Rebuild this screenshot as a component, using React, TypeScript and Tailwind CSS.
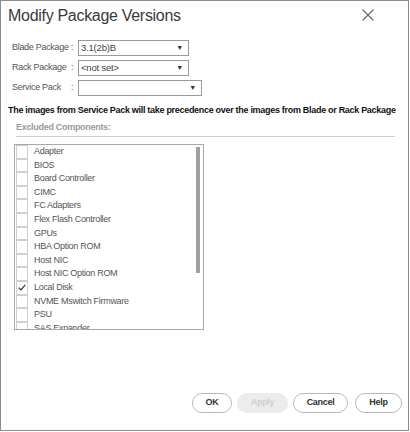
import React from "react";

const items = [
  "Adapter",
  "BIOS",
  "Board Controller",
  "CIMC",
  "FC Adapters",
  "Flex Flash Controller",
  "GPUs",
  "HBA Option ROM",
  "Host NIC",
  "Host NIC Option ROM",
  "Local Disk",
  "NVME Mswitch Firmware",
  "PSU",
  "SAS Expander",
];

function Select({ value, width }: { value: string; width: string }) {
  return (
    <div
      className={`${width} h-[16px] border border-[#9a9a9a] bg-white flex items-center justify-between pl-[2px] pr-[5px] text-[9.5px] tracking-[-0.2px] text-[#444]`}
    >
      <span>{value}</span>
      <span className="text-[7px] text-[#333]">▼</span>
    </div>
  );
}

function Row({ label, value, width }: { label: string; value: string; width: string }) {
  return (
    <div className="flex items-center">
      <span className="w-[59px] whitespace-nowrap">{label}</span>
      <span className="w-[7px]">:</span>
      <Select value={value} width={width} />
    </div>
  );
}

export default function App() {
  return (
    <div className="w-[410px] h-[432px] bg-white" style={{ fontFamily: "'Liberation Sans', Arial, sans-serif" }}>
      <div className="w-[409px] h-[431px] border border-[#8c8c8c] flex flex-col relative">
        <div className="flex items-start justify-between pl-[7px] pr-[34px] pt-[4px]">
          <div className="text-[16px] tracking-[-0.3px] text-[#3a3a3a] leading-[22px] whitespace-nowrap">Modify Package Versions</div>
          <svg width="12" height="12" viewBox="0 0 12 12" className="mt-[4px]">
            <path d="M0.5 0.5 L11.5 11.5 M11.5 0.5 L0.5 11.5" stroke="#666" strokeWidth="1.1" fill="none" />
          </svg>
        </div>

        <div className="flex flex-col gap-[4px] mt-[13px] pl-[11px] text-[9px] tracking-[-0.3px] text-[#555]">
          <Row label="Blade Package" value="3.1(2b)B" width="w-[111px]" />
          <Row label="Rack Package" value="<not set>" width="w-[111px]" />
          <Row label="Service Pack" value="" width="w-[124px]" />
        </div>

        <div className="mt-[8px] pl-[7px] text-[9px] leading-[12px] tracking-[-0.3px] font-bold text-[#111] whitespace-nowrap">
          The images from Service Pack will take precedence over the images from Blade or Rack Package
        </div>
        <div className="mt-[5px] ml-[15px] mr-[13px] pb-[3px] border-b border-[#d0d0d0] text-[9px] leading-[12px] tracking-[-0.3px] font-bold text-[#9a9a9a]">
          Excluded Components:
        </div>

        <div className="mt-[7px] ml-[13px] w-[190px] h-[186px] border border-[#a8a8a8] overflow-hidden relative">
          <div className="flex flex-col">
            {items.map((it) => (
              <div key={it} className="flex items-center h-[13.6px] shrink-0">
                <div className="w-[12px] h-[13.6px] ml-[1px] border border-[#cfcfcf] flex items-center justify-center">
                  {it === "Local Disk" && (
                    <svg width="8" height="7" viewBox="0 0 8 7">
                      <path d="M0.8 3.6 L3 5.8 L7.2 0.8" stroke="#333" strokeWidth="1.2" fill="none" />
                    </svg>
                  )}
                </div>
                <span className="ml-[6px] text-[9px] tracking-[-0.3px] text-[#555] whitespace-nowrap">{it}</span>
              </div>
            ))}
          </div>
          <div className="absolute right-[3px] top-[2px] w-[4px] h-[126px] bg-[#a0a0a0]" />
        </div>

        <div className="mt-auto mb-[17px] flex justify-end pr-[6px] text-[9px] tracking-[-0.3px] font-bold">
          <button className="w-[40px] h-[20px] rounded-full border border-[#b8b8b8] text-[#333]">OK</button>
          <button className="ml-[5px] w-[51px] h-[20px] rounded-full bg-[#ececec] text-[#d0d0d0]">Apply</button>
          <button className="ml-[5px] w-[55px] h-[20px] rounded-full border border-[#b8b8b8] text-[#333]">Cancel</button>
          <button className="ml-[7px] w-[47px] h-[20px] rounded-full border border-[#b8b8b8] text-[#333]">Help</button>
        </div>
      </div>
    </div>
  );
}
